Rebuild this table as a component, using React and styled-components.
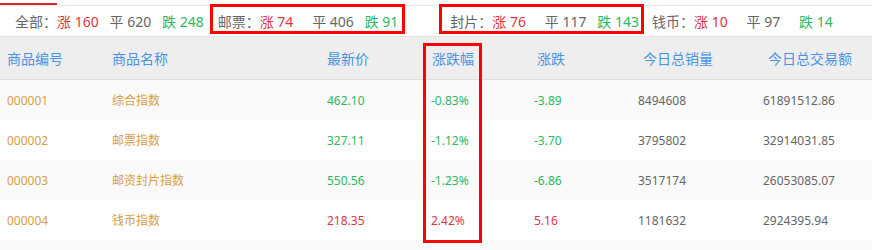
import React from "react";
import styled, { createGlobalStyle } from "styled-components";

const GlobalStyle = createGlobalStyle`
  html, body { margin: 0; padding: 0; background: #fff; }
  body { font-family: "Noto Sans", "Noto Sans CJK SC", sans-serif; }
`;

const Page = styled.div`
  position: relative;
  width: 872px;
  height: 250px;
  overflow: hidden;
  background: #fff;
`;

const TabBar = styled.div`
  height: 5px;
  display: flex;
  align-items: flex-end;
  border-bottom: 1px solid #e6e6e6;
`;

const ActiveTab = styled.div`
  width: 57px;
  height: 2px;
  background: #d9262e;
`;

const StatsBar = styled.div`
  display: flex;
  align-items: center;
  height: 30px;
  padding-left: 15px;
  border-bottom: 1px solid #e3e3e3;
  font-size: 14px;
  color: #666;
  white-space: nowrap;
`;

const Group = styled.div`
  display: flex;
  align-items: center;
  margin-left: ${(p) => p.$space || 0}px;
`;

const GroupLabel = styled.span`
  width: 42px;
  color: #666;
`;

const toneColor = {
  up: "#de3540",
  flat: "#666666",
  down: "#2bb860",
  gold: "#d99d47",
  grey: "#666666",
};

const Stat = styled.span`
  min-width: 42.5px;
  margin-right: 10px;
  color: ${(p) => toneColor[p.$tone]};
  &:last-child {
    margin-right: 0;
    min-width: 0;
  }
`;

const Mark = styled.div`
  position: absolute;
  box-sizing: border-box;
  border: 3px solid #ff0000;
  pointer-events: none;
  left: ${(p) => p.$x}px;
  top: ${(p) => p.$y}px;
  width: ${(p) => p.$w}px;
  height: ${(p) => p.$h}px;
`;

const COLS = "105px 215px 104px 103px 104px 125px 116px";

const HeadRow = styled.div`
  display: grid;
  grid-template-columns: ${COLS};
  height: 42px;
  background: #eeeeee;
  border-bottom: 1px solid #dddddd;
`;

const HeadCell = styled.div`
  display: flex;
  align-items: center;
  padding-left: ${(p) => p.$indent}px;
  font-size: 14px;
  color: #4a93e4;
  white-space: nowrap;
`;

const Row = styled.div`
  display: grid;
  grid-template-columns: ${COLS};
  height: 40px;
  background: ${(p) => (p.$striped ? "#fafafa" : "#ffffff")};
`;

const Cell = styled.div`
  display: flex;
  align-items: center;
  padding-left: 7px;
  font-size: 12px;
  color: ${(p) => toneColor[p.$tone]};
  white-space: nowrap;
`;

const groups = [
  { label: "全部：", up: 160, flat: 620, down: 248, space: 0 },
  { label: "邮票：", up: 74, flat: 406, down: 91, space: 14 },
  { label: "封片：", up: 76, flat: 117, down: 143, space: 52 },
  { label: "钱币：", up: 10, flat: 97, down: 14, space: 13 },
];

const headers = [
  { t: "商品编号", i: 7 },
  { t: "商品名称", i: 7 },
  { t: "最新价", i: 7 },
  { t: "涨跌幅", i: 8 },
  { t: "涨跌", i: 10 },
  { t: "今日总销量", i: 12 },
  { t: "今日总交易额", i: 12 },
];

const rows = [
  ["000001", "综合指数", "462.10", "-0.83%", "-3.89", "8494608", "61891512.86", "down"],
  ["000002", "邮票指数", "327.11", "-1.12%", "-3.70", "3795802", "32914031.85", "down"],
  ["000003", "邮资封片指数", "550.56", "-1.23%", "-6.86", "3517174", "26053085.07", "down"],
  ["000004", "钱币指数", "218.35", "2.42%", "5.16", "1181632", "2924395.94", "up"],
];

export default function App() {
  return (
    <>
      <GlobalStyle />
      <Page>
        <TabBar>
          <ActiveTab />
        </TabBar>
        <StatsBar>
          {groups.map((g) => (
            <Group key={g.label} $space={g.space}>
              <GroupLabel>{g.label}</GroupLabel>
              <Stat $tone="up">涨 {g.up}</Stat>
              <Stat $tone="flat">平 {g.flat}</Stat>
              <Stat $tone="down">跌 {g.down}</Stat>
            </Group>
          ))}
        </StatsBar>
        <HeadRow>
          {headers.map((h) => (
            <HeadCell key={h.t} $indent={h.i}>
              {h.t}
            </HeadCell>
          ))}
        </HeadRow>
        {rows.map((r, idx) => (
          <Row key={r[0]} $striped={idx % 2 === 0}>
            <Cell $tone="gold">{r[0]}</Cell>
            <Cell $tone="gold">{r[1]}</Cell>
            <Cell $tone={r[7]}>{r[2]}</Cell>
            <Cell $tone={r[7]}>{r[3]}</Cell>
            <Cell $tone={r[7]}>{r[4]}</Cell>
            <Cell $tone="grey">{r[5]}</Cell>
            <Cell $tone="grey">{r[6]}</Cell>
          </Row>
        ))}
        <Row $striped />
        <Mark $x={210} $y={4} $w={195} $h={30} />
        <Mark $x={439} $y={4} $w={205} $h={30} />
        <Mark $x={423} $y={43} $w={59} $h={200} />
      </Page>
    </>
  );
}
